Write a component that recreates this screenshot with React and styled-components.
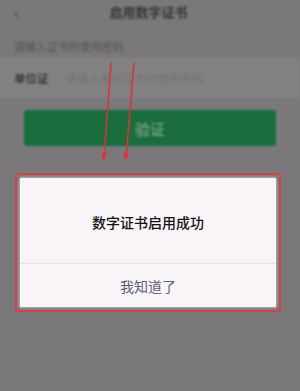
import React from "react";
import styled, { createGlobalStyle } from "styled-components";

const Global = createGlobalStyle`
  html, body { margin: 0; padding: 0; }
  body { background: #7a787b; font-family: "Noto Sans CJK SC", "Noto Sans", sans-serif; }
`;

const Screen = styled.div`
  position: relative;
  width: 300px;
  height: 391px;
  overflow: hidden;
  background: #7a787b;
`;

const Page = styled.div`
  display: flex;
  flex-direction: column;
  filter: blur(1px);
`;

const TopBar = styled.div`
  height: 26px;
  display: flex;
  align-items: center;
  padding: 0 14px;
  color: #363537;
`;

const Back = styled.span`
  font-size: 16px;
  line-height: 1;
  color: #4a494b;
  margin-top: -2px;
`;

const Title = styled.div`
  flex: 1;
  text-align: center;
  font-size: 13px;
  font-weight: 700;
  margin-right: 8px;
  margin-top: -3px;
`;

const Hint = styled.div`
  padding: 13px 14px 5px;
  font-size: 11px;
  line-height: 14px;
  color: #555356;
`;

const Row = styled.div`
  height: 40px;
  background: #838184;
  display: flex;
  align-items: center;
  padding: 0 14px;
  gap: 17px;
`;

const Label = styled.span`
  font-size: 11.5px;
  color: #3a393b;
  font-weight: 700;
`;

const Placeholder = styled.span`
  font-size: 11.5px;
  color: #737174;
`;

const Button = styled.div`
  margin: 12px 24px 0;
  height: 36px;
  border-radius: 3px;
  background: #1b6d3d;
  display: flex;
  align-items: center;
  justify-content: center;
  font-size: 15px;
  color: #8db199;
`;

const Frame = styled.div`
  position: absolute;
  left: 15px;
  top: 173px;
  width: 266px;
  height: 139px;
  border: 2px solid #cf4446;
  padding: 3px;
  box-sizing: border-box;
  display: flex;
`;

const Dialog = styled.div`
  flex: 1;
  background: #f8f4f8;
  box-shadow: 0 0 3px 0 rgba(248, 244, 248, 0.9);
  display: flex;
  flex-direction: column;
`;

const Message = styled.div`
  flex: 0 0 86px;
  display: flex;
  align-items: center;
  justify-content: center;
  font-size: 14px;
  font-weight: 500;
  color: #141214;
  padding-top: 2px;
  box-sizing: border-box;
  border-bottom: 1px solid #e6e2e6;
`;

const Action = styled.div`
  flex: 1;
  display: flex;
  align-items: center;
  justify-content: center;
  font-size: 14px;
  color: #5b6076;
`;

const Arrows = styled.svg`
  position: absolute;
  left: 0;
  top: 0;
  pointer-events: none;
`;

export default function App() {
  return (
    <Screen>
      <Global />
      <Page>
        <TopBar>
          <Back>‹</Back>
          <Title>启用数字证书</Title>
        </TopBar>
        <Hint>请输入证书的使用密码</Hint>
        <Row>
          <Label>单位证</Label>
          <Placeholder>请输入单位证书的使用密码</Placeholder>
        </Row>
        <Button>验证</Button>
      </Page>
      <Arrows width="300" height="391" viewBox="0 0 300 391">
        <g stroke="#d9343a" strokeWidth="1.6" fill="none" strokeLinecap="round">
          <line x1="111" y1="63" x2="104" y2="158" />
          <line x1="134" y1="63" x2="126" y2="158" />
        </g>
        <g fill="#d9343a">
          <polygon points="101,153 107,153 103.6,161" />
          <polygon points="123,153 129,153 125.6,161" />
        </g>
      </Arrows>
      <Frame>
        <Dialog>
          <Message>数字证书启用成功</Message>
          <Action>我知道了</Action>
        </Dialog>
      </Frame>
    </Screen>
  );
}
